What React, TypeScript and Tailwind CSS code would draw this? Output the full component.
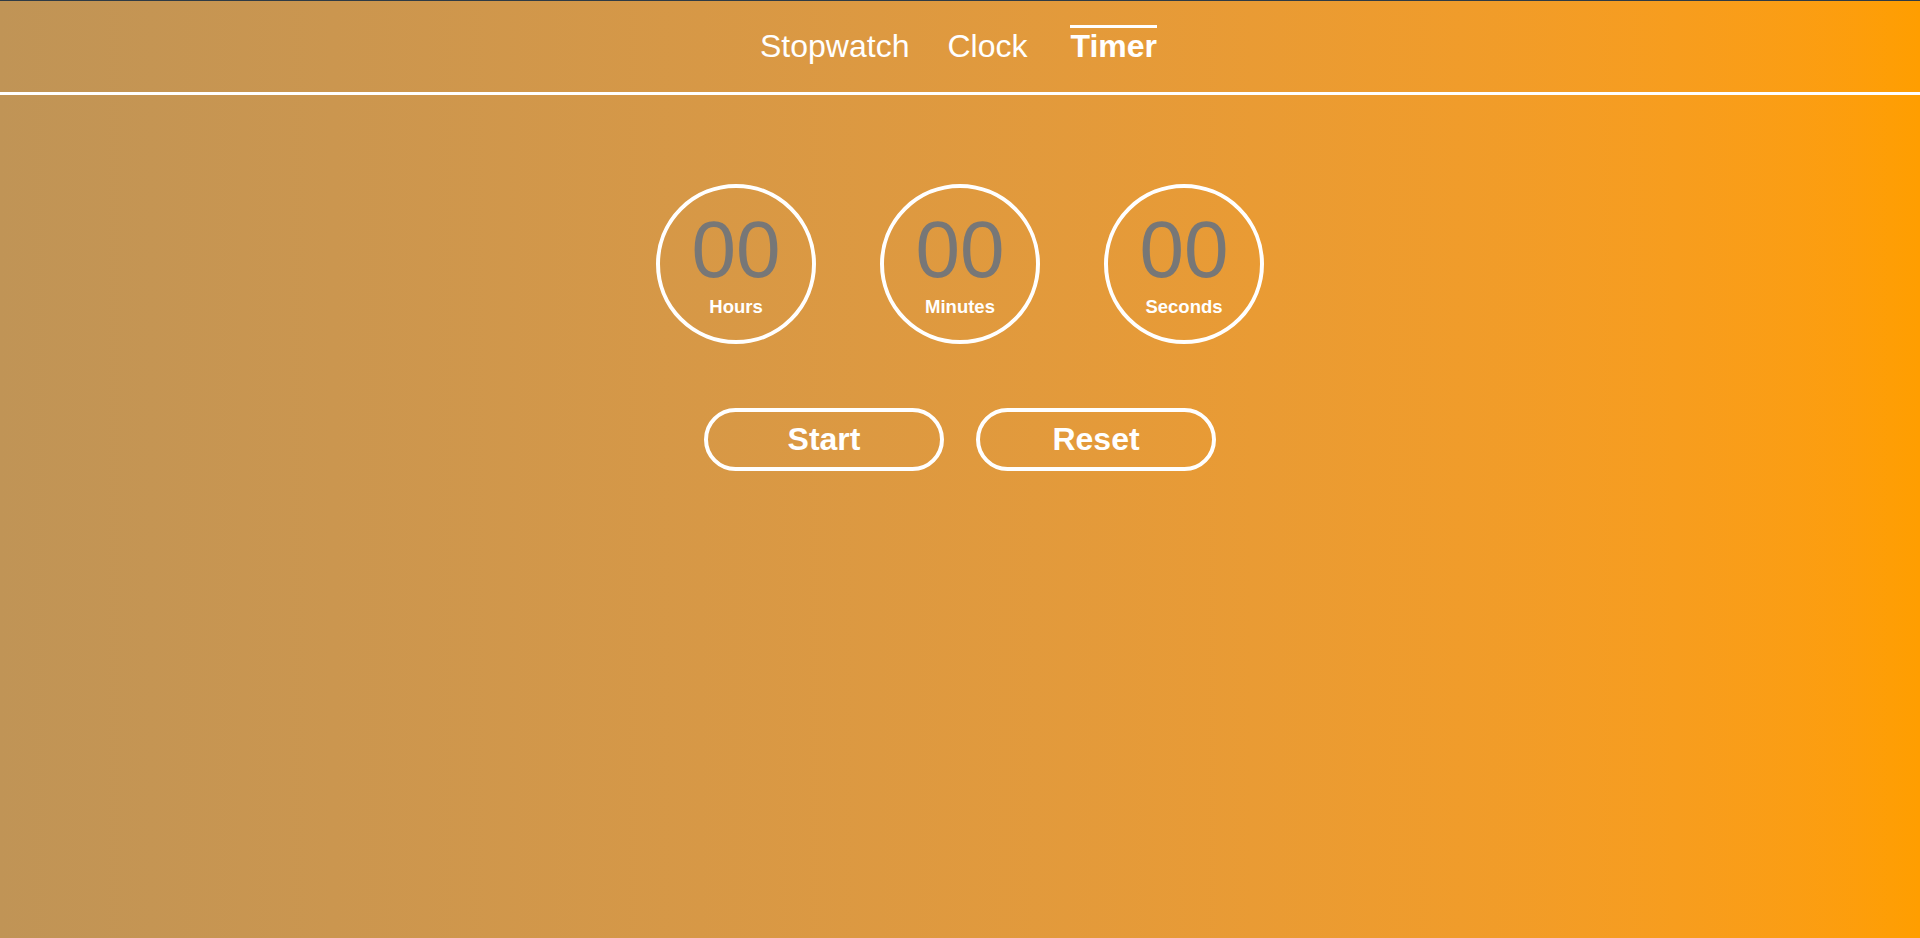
import React from "react";

function Unit({ label }: { label: string }) {
  return (
    <div className="flex h-[160px] w-[160px] flex-col items-center rounded-full border-[4px] border-white pt-[15px]">
      <div className="text-[80px] leading-[93px] text-[#777777]">00</div>
      <div className="text-[18.5px] font-bold leading-[21px] text-white">{label}</div>
    </div>
  );
}

export default function App() {
  return (
    <div
      className="min-h-[938px] w-full bg-linear-to-r from-[#c09456] to-[#ff9e00] text-white"
      style={{ fontFamily: '"Liberation Sans", Arial, sans-serif' }}
    >
      <div className="h-px w-full bg-[#2f3b45]" />
      <nav className="flex h-[94px] justify-center border-b-[3px] border-white pr-[3px] pt-[24px]">
        <a className="mr-[38px] h-fit border-t-[3px] border-transparent text-[32px] leading-[37px]">Stopwatch</a>
        <a className="mr-[43px] h-fit border-t-[3px] border-transparent text-[32px] leading-[37px]">Clock</a>
        <a className="h-fit border-t-[3px] border-white text-[32px] font-bold leading-[37px]">Timer</a>
      </nav>
      <main className="flex flex-col items-center pt-[89px]">
        <div className="flex gap-[64px]">
          <Unit label="Hours" />
          <Unit label="Minutes" />
          <Unit label="Seconds" />
        </div>
        <div className="mt-[64px] flex gap-[32px]">
          <button className="h-[63px] w-[240px] rounded-full border-[4px] border-white text-[32px] font-bold leading-[37px] text-white">
            Start
          </button>
          <button className="h-[63px] w-[240px] rounded-full border-[4px] border-white text-[32px] font-bold leading-[37px] text-white">
            Reset
          </button>
        </div>
      </main>
    </div>
  );
}
